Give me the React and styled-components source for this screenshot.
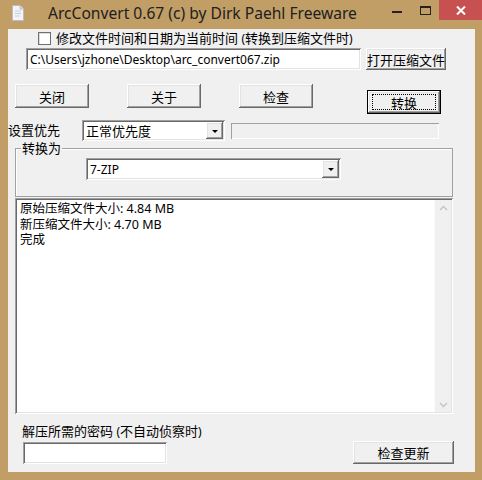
import React from "react";
import styled, { createGlobalStyle, css } from "styled-components";

const GlobalStyle = createGlobalStyle`
  html, body {
    margin: 0;
    padding: 0;
    background: #c19e66;
  }
  body {
    font-family: "Noto Sans", "Noto Sans CJK SC", sans-serif;
    font-size: 13px;
    color: #000;
  }
`;

const raised = css`
  background: #f0f0f0;
  box-shadow: inset -1px -1px #696969, inset 1px 1px #ffffff,
    inset -2px -2px #a0a0a0, inset 2px 2px #e3e3e3;
`;

const sunken = css`
  box-shadow: inset 1px 1px #a0a0a0, inset -1px -1px #ffffff,
    inset 2px 2px #696969, inset -2px -2px #e3e3e3;
`;

// latin runs are set a bit smaller than the CJK text, like the original UI font
const Lat = styled.span`
  font-size: 12px;
`;

const Frame = styled.div`
  width: 482px;
  height: 480px;
  background: #c19e66;
  display: flex;
  flex-direction: column;
`;

const TitleBar = styled.div`
  height: 29px;
  display: flex;
  align-items: flex-start;
`;

const AppIcon = styled.svg`
  margin: 5px 0 0 12px;
  width: 12px;
  height: 16px;
`;

const Title = styled.div`
  margin: 3px 0 0 24px;
  font-family: "Noto Sans", sans-serif;
  font-size: 15.6px;
  line-height: 20px;
  color: #202020;
  flex: 1;
`;

const WinButton = styled.div`
  height: 20px;
  display: flex;
  align-items: center;
  justify-content: center;
  width: ${(p) => p.$w}px;
  background: ${(p) => (p.$close ? "#c75050" : "transparent")};
`;

const Client = styled.div`
  margin: 0 7px 0 8px;
  height: 443px;
  background: #f0f0f0;
  display: flex;
  flex-direction: column;
`;

const Row = styled.div`
  display: flex;
  align-items: ${(p) => p.$align || "center"};
  margin-top: ${(p) => p.$top || 0}px;
  padding-left: ${(p) => p.$left || 0}px;
  height: ${(p) => p.$h}px;
`;

const CheckBox = styled.span`
  width: 11px;
  height: 11px;
  flex-shrink: 0;
  background: #fff;
  border: 1px solid #707070;
  box-shadow: inset 1px 1px #dcdcdc;
`;

const Label = styled.span`
  white-space: nowrap;
  line-height: 15px;
  margin-left: ${(p) => p.$ml || 0}px;
  width: ${(p) => (p.$w ? `${p.$w}px` : "auto")};
`;

const TextField = styled.div`
  ${sunken};
  background: #fff;
  width: ${(p) => p.$w}px;
  height: ${(p) => p.$h || 22}px;
  box-sizing: border-box;
  padding: 0 4px;
  display: flex;
  align-items: center;
  margin-left: ${(p) => p.$ml || 0}px;
  white-space: nowrap;
`;

const Button = styled.div`
  ${raised};
  width: ${(p) => p.$w}px;
  height: ${(p) => p.$h || 24}px;
  box-sizing: border-box;
  display: flex;
  align-items: center;
  justify-content: center;
  margin-left: ${(p) => p.$ml || 0}px;
  margin-top: ${(p) => p.$mt || 0}px;
  white-space: nowrap;
  ${(p) =>
    p.$default &&
    css`
      box-shadow: inset 0 0 0 1px #000, inset -2px -2px #696969,
        inset 2px 2px #ffffff, inset -3px -3px #a0a0a0, inset 3px 3px #e3e3e3;
    `}
`;

const FocusRing = styled.span`
  border: 1px dotted #000;
  width: 62px;
  height: 14px;
  display: flex;
  align-items: center;
  justify-content: center;
`;

const Select = styled.div`
  ${sunken};
  background: #fff;
  width: ${(p) => p.$w}px;
  height: ${(p) => p.$h || 21}px;
  box-sizing: border-box;
  padding: 2px;
  display: flex;
  align-items: stretch;
`;

const SelectText = styled.span`
  flex: 1;
  display: flex;
  align-items: center;
  padding-left: 2px;
`;

const DropButton = styled.span`
  ${raised};
  width: 17px;
  display: flex;
  align-items: center;
  justify-content: center;
  &::after {
    content: "";
    border-left: 3px solid transparent;
    border-right: 3px solid transparent;
    border-top: 3px solid #000;
    margin-top: 1px;
  }
`;

const Progress = styled.div`
  width: 208px;
  height: 16px;
  margin-left: 6px;
  box-sizing: border-box;
  box-shadow: inset 1px 1px #a0a0a0, inset -1px -1px #ffffff;
  background: #f0f0f0;
`;

const GroupBox = styled.div`
  margin: 7px 0 0 7px;
  width: 438px;
  height: 49px;
  box-sizing: border-box;
  box-shadow: inset 1px 1px #a0a0a0, inset -1px -1px #a0a0a0,
    inset 2px 2px #fff;
  padding: 10px 0 0 71px;
  position: relative;
`;

const Legend = styled.span`
  position: absolute;
  top: -7px;
  left: 6px;
  background: #f0f0f0;
  padding: 0 1px;
  line-height: 15px;
`;

const LogBox = styled.div`
  ${sunken};
  background: #fff;
  margin: 1px 0 0 7px;
  width: 438px;
  height: 216px;
  box-sizing: border-box;
  padding: 2px;
  display: flex;
`;

const LogText = styled.div`
  flex: 1;
  padding: 1px 0 0 3px;
  display: flex;
  flex-direction: column;
`;

const LogLine = styled.div`
  height: 15.5px;
  line-height: 15.5px;
  font-size: 12.5px;
  white-space: nowrap;
`;

const ScrollBar = styled.div`
  width: 17px;
  background: #f0f0f0;
  display: flex;
  flex-direction: column;
  justify-content: space-between;
  align-items: center;
  padding: 5px 0 4px;
  box-sizing: border-box;
  border-left: 1px solid #fafafa;
`;

const Bottom = styled.div`
  display: flex;
  justify-content: space-between;
  align-items: flex-end;
  padding: 10px 21px 0 14px;
`;

const PassCol = styled.div`
  display: flex;
  flex-direction: column;
  gap: 3px;
`;

const Chevron = ({ up }) => (
  <svg width="9" height="6" viewBox="0 0 9 6">
    <path
      d={up ? "M1 5 L4.5 1.5 L8 5" : "M1 1 L4.5 4.5 L8 1"}
      fill="none"
      stroke="#c4c4c4"
      strokeWidth="1.4"
    />
  </svg>
);

const logLines = ["原始压缩文件大小: 4.84 MB", "新压缩文件大小: 4.70 MB", "完成"];

export default function App() {
  return (
    <>
      <GlobalStyle />
      <Frame>
        <TitleBar>
          <AppIcon viewBox="0 0 12 16">
            <path d="M0.5 0.5 H8 L11.5 4 V15.5 H0.5 Z" fill="#f4f4f8" stroke="#b8bcc8" />
            <path d="M8 0.5 V4 H11.5" fill="#dde" stroke="#b8bcc8" />
            <path d="M3 6 h6 M3 8.5 h6 M3 11 h5" stroke="#c8ccd8" />
          </AppIcon>
          <Title>ArcConvert 0.67 (c) by Dirk Paehl Freeware</Title>
          <WinButton $w={30}>
            <svg width="10" height="10" viewBox="0 0 10 10">
              <rect x="0" y="6" width="10" height="2" fill="#222" />
            </svg>
          </WinButton>
          <WinButton $w={27}>
            <svg width="11" height="9" viewBox="0 0 11 9">
              <rect x="0.5" y="0.5" width="10" height="8" fill="none" stroke="#222" />
              <rect x="0" y="0" width="11" height="2" fill="#222" />
            </svg>
          </WinButton>
          <WinButton $w={43} $close>
            <svg width="10" height="9" viewBox="0 0 10 9">
              <path d="M1 0.5 L9 8.5 M9 0.5 L1 8.5" stroke="#fff" strokeWidth="2" />
            </svg>
          </WinButton>
        </TitleBar>

        <Client>
          <Row $top={3} $left={30} $h={13}>
            <CheckBox />
            <Label $ml={5}>
              修改文件时间和日期为当前时间 <Lat>(</Lat>转换到压缩文件时<Lat>)</Lat>
            </Label>
          </Row>

          <Row $top={3} $left={18} $h={22}>
            <TextField $w={335}>
              <Lat>C:\Users\jzhone\Desktop\arc_convert067.zip</Lat>
            </TextField>
            <Button $w={80} $h={22} $ml={5}>打开压缩文件</Button>
          </Row>

          <Row $top={14} $left={7} $h={30} $align="flex-start">
            <Button $w={74}>关闭</Button>
            <Button $w={74} $ml={38}>关于</Button>
            <Button $w={74} $ml={38}>检查</Button>
            <Button $w={74} $ml={54} $mt={6} $default>
              <FocusRing>转换</FocusRing>
            </Button>
          </Row>

          <Row $top={6} $h={21}>
            <Label $w={74}>设置优先</Label>
            <Select $w={143}>
              <SelectText>正常优先度</SelectText>
              <DropButton />
            </Select>
            <Progress />
          </Row>

          <GroupBox>
            <Legend>转换为</Legend>
            <Select $w={255} $h={22}>
              <SelectText>
                <Lat>7-ZIP</Lat>
              </SelectText>
              <DropButton />
            </Select>
          </GroupBox>

          <LogBox>
            <LogText>
              {logLines.map((line) => (
                <LogLine key={line}>{line}</LogLine>
              ))}
            </LogText>
            <ScrollBar>
              <Chevron up />
              <Chevron />
            </ScrollBar>
          </LogBox>

          <Bottom>
            <PassCol>
              <Label>
                解压所需的密码 <Lat>(</Lat>不自动侦察时<Lat>)</Lat>
              </Label>
              <TextField $w={144} $h={22} $ml={1} />
            </PassCol>
            <Button $w={101} $h={23}>检查更新</Button>
          </Bottom>
        </Client>
      </Frame>
    </>
  );
}
